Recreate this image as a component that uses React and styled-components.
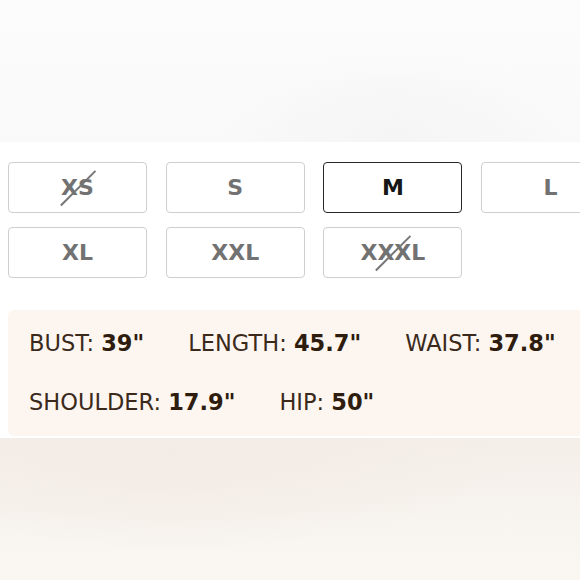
import styled, {createGlobalStyle} from "styled-components";

const GlobalStyle = createGlobalStyle`
  html, body {
    margin: 0;
    padding: 0;
    overflow: hidden;
    background: #ffffff;
    font-family: "DejaVu Sans", "Liberation Sans", sans-serif;
  }
`;

const Page = styled.div`
  width: 580px;
  height: 580px;
  display: flex;
  flex-direction: column;
  overflow: hidden;
`;

/* blurred product photo edges, above and below the picker */
const PhotoStrip = styled.div`
  flex: 0 0 142px;
  background: ${p =>
    p.$bottom
      ? "radial-gradient(ellipse 60% 70% at 30% 10%, #f3ebe5 0%, rgba(243,235,229,0) 100%), linear-gradient(180deg, #f4eee9 0%, #f8f4ef 60%, #faf7f3 100%)"
      : "radial-gradient(ellipse 30% 60% at 68% 95%, #f5f5f5 0%, rgba(245,245,245,0) 100%), linear-gradient(180deg, #fcfcfc 0%, #f9f9f9 100%)"};
  margin-top: ${p => (p.$bottom ? "2px" : "0")};
`;

const SizeGrid = styled.div`
  display: grid;
  grid-template-columns: repeat(4, 139px);
  column-gap: 18.7px;
  row-gap: 14px;
  padding: 20px 0 0 8px;
`;

const SizeButton = styled.button`
  position: relative;
  height: 51px;
  display: flex;
  align-items: center;
  justify-content: center;
  box-sizing: border-box;
  background: #ffffff;
  border: 1.5px solid ${p => (p.$active ? "#262626" : "#cfcfcf")};
  border-radius: 4px;
  font-family: "DejaVu Sans", sans-serif;
  font-size: 22px;
  font-weight: 700;
  color: ${p => (p.$active ? "#161616" : "#727272")};
  padding: 0;
  cursor: pointer;

  /* sold-out sizes get a diagonal strike */
  &::after {
    content: "";
    display: ${p => (p.$soldOut ? "block" : "none")};
    position: absolute;
    left: 50%;
    top: 50%;
    width: 49px;
    height: 1.5px;
    background: #767676;
    transform: translate(-50%, -50%) rotate(-45deg);
  }
`;

const Measurements = styled.div`
  margin: 32px -20px 0 8px;
  padding: 20px 0 20px 21px;
  background: #fdf6f0;
  border-radius: 6px;
  display: flex;
  flex-wrap: wrap;
  column-gap: 44px;
  row-gap: 32px;
  font-size: 22.5px;
  line-height: 27px;
  color: #3b2a1b;
`;

const Measure = styled.span`
  white-space: nowrap;

  & b {
    font-weight: 700;
    color: #2e1d0e;
  }
`;

const sizes = [
  {label: "XS", soldOut: true},
  {label: "S"},
  {label: "M", active: true},
  {label: "L"},
  {label: "XL"},
  {label: "XXL"},
  {label: "XXXL", soldOut: true},
];

const measures = [
  ["BUST", '39"'],
  ["LENGTH", '45.7"'],
  ["WAIST", '37.8"'],
  ["SHOULDER", '17.9"'],
  ["HIP", '50"'],
];

export default function App() {
  return (
    <Page>
      <GlobalStyle />
      <PhotoStrip />
      <SizeGrid>
        {sizes.map(s => (
          <SizeButton key={s.label} $active={s.active} $soldOut={s.soldOut}>
            {s.label}
          </SizeButton>
        ))}
      </SizeGrid>
      <Measurements>
        {measures.map(([name, value]) => (
          <Measure key={name}>
            {name}: <b>{value}</b>
          </Measure>
        ))}
      </Measurements>
      <PhotoStrip $bottom />
    </Page>
  );
}
